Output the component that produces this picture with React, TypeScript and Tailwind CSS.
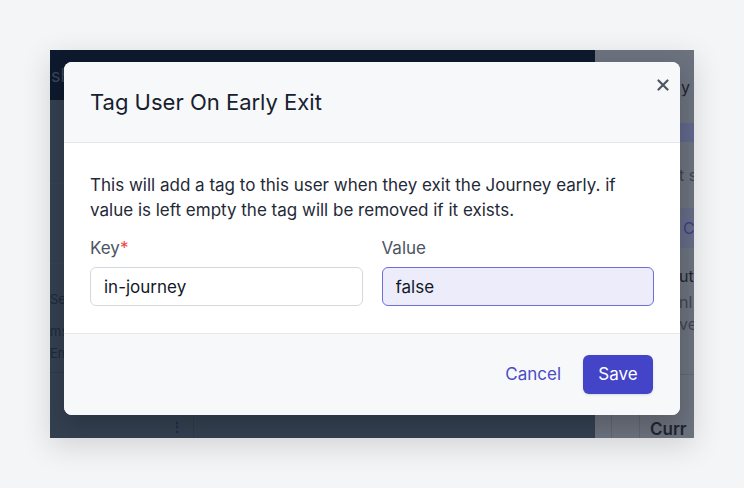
export default function App() {
  return (
    <div className="min-h-screen w-full bg-[#f4f5f7] pt-[50px] pl-[50px] font-['Inter',sans-serif]">
      <div className="relative flex h-[388px] w-[644px] overflow-hidden shadow-[0_8px_28px_rgba(0,0,0,0.14)]">
        {/* dimmed app behind the dialog */}
        <div className="flex w-[545px] shrink-0 flex-col bg-[#334050]">
          <div className="flex h-[50px] items-center bg-[#0d1a2d] pl-[1px] text-[18px] text-[#3a4658]">
            sh
          </div>
          <div className="flex flex-1 flex-col">
            <div className="h-[84px] border-b border-[#364354]" />
            <div className="h-[80px] border-b border-[#364354]" />
            <div className="flex flex-col pt-[24px] text-[13px] leading-[22px] text-[#1f2a3a]">
              <span className="h-[32px]">Se</span>
              <span className="h-[22px]">ms</span>
              <span className="h-[22px]">Em</span>
            </div>
            <div className="mt-[8px] border-b border-[#2e3a4a]" />
          </div>
          <div className="flex h-[23px]">
            <div className="flex w-[143px] items-center justify-end pr-[10px] text-[12px] font-bold text-[#1c2a4a]">
              ⋮
            </div>
            <div className="flex-1 border-l border-[#2e3a4a]" />
          </div>
        </div>
        <div className="flex min-w-0 flex-1 flex-col overflow-hidden whitespace-nowrap bg-[#6b717d] text-[16px]">
          <div className="flex h-[73px] items-center pl-[86px] text-[#1f2530]">y S</div>
          <div className="h-[19px] bg-[#5f6688]" />
          <div className="flex h-[66px] items-center pl-[84px] text-[#3e4450]">t s</div>
          <div className="flex h-[40px] items-center bg-[#646a84] pl-[88px] text-[#3b3f8a]">C</div>
          <div className="flex h-[40px] items-end pl-[84px] text-[#1f2530]">utu</div>
          <div className="flex h-[26px] items-end pl-[84px] text-[#40464f]">nl</div>
          <div className="flex h-[22px] items-end pl-[84px] text-[#40464f]">ve.</div>
          <div className="mt-[38px] flex flex-1 border-t border-[#60666f]">
            <div className="w-[17px] shrink-0 border-r border-[#60666f]" />
            <div className="w-[28px] shrink-0 border-r border-[#60666f]" />
            <div className="flex flex-1 items-end pl-[10px] text-[17px] font-semibold leading-none text-[#1f2530]">
              Curr
            </div>
          </div>
        </div>

        {/* dialog */}
        <div className="absolute left-[14px] top-[12px] flex w-[616px] flex-col overflow-hidden rounded-lg bg-white shadow-[0_10px_25px_rgba(0,0,0,0.2)]">
          <div className="relative flex h-[81px] items-center border-b border-[#e5e7eb] bg-[#f7f8fa] px-[26px]">
            <h2 className="text-[22px] text-[#17202e]">Tag User On Early Exit</h2>
            <button className="absolute right-[11px] top-[17px] flex h-[12px] w-[12px] items-center justify-center text-[#4b5563]" aria-label="Close">
              <svg viewBox="0 0 12 12" className="h-[12px] w-[12px]" fill="none" stroke="currentColor" strokeWidth="2.2" strokeLinecap="round">
                <path d="M1.5 1.5l9 9M10.5 1.5l-9 9" />
              </svg>
            </button>
          </div>
          <div className="h-[190px] px-[26px] pt-[30px]">
            <p className="text-[17px] leading-[25px] text-[#1f2937]">
              This will add a tag to this user when they exit the Journey early. if value is left empty the tag will be removed if it exists.
            </p>
            <div className="mt-[13px] grid grid-cols-2 gap-[19px]">
              <label className="flex flex-col">
                <span className="text-[17px] leading-[24px] text-[#4b5563]">
                  Key<span className="text-[#ef4444]">*</span>
                </span>
                <input
                  className="mt-[7px] h-[39px] rounded-md border border-[#d5d8de] bg-white px-[13px] text-[17px] text-[#111827] outline-none"
                  defaultValue="in-journey"
                />
              </label>
              <label className="flex flex-col">
                <span className="text-[17px] leading-[24px] text-[#4b5563]">Value</span>
                <input
                  className="mt-[7px] h-[39px] rounded-md border border-[#6d6fd8] bg-[#edecfa] px-[13px] text-[17px] text-[#111827] outline-none"
                  defaultValue="false"
                />
              </label>
            </div>
          </div>
          <div className="flex h-[82px] items-center justify-end gap-[22px] border-t border-[#e5e7eb] bg-[#f7f8fa] px-[27px]">
            <button className="text-[17px] text-[#4b4bc9]">Cancel</button>
            <button className="h-[39px] w-[70px] rounded-md bg-[#4444c8] text-[17px] text-white shadow-sm">Save</button>
          </div>
        </div>
      </div>
    </div>
  );
}
